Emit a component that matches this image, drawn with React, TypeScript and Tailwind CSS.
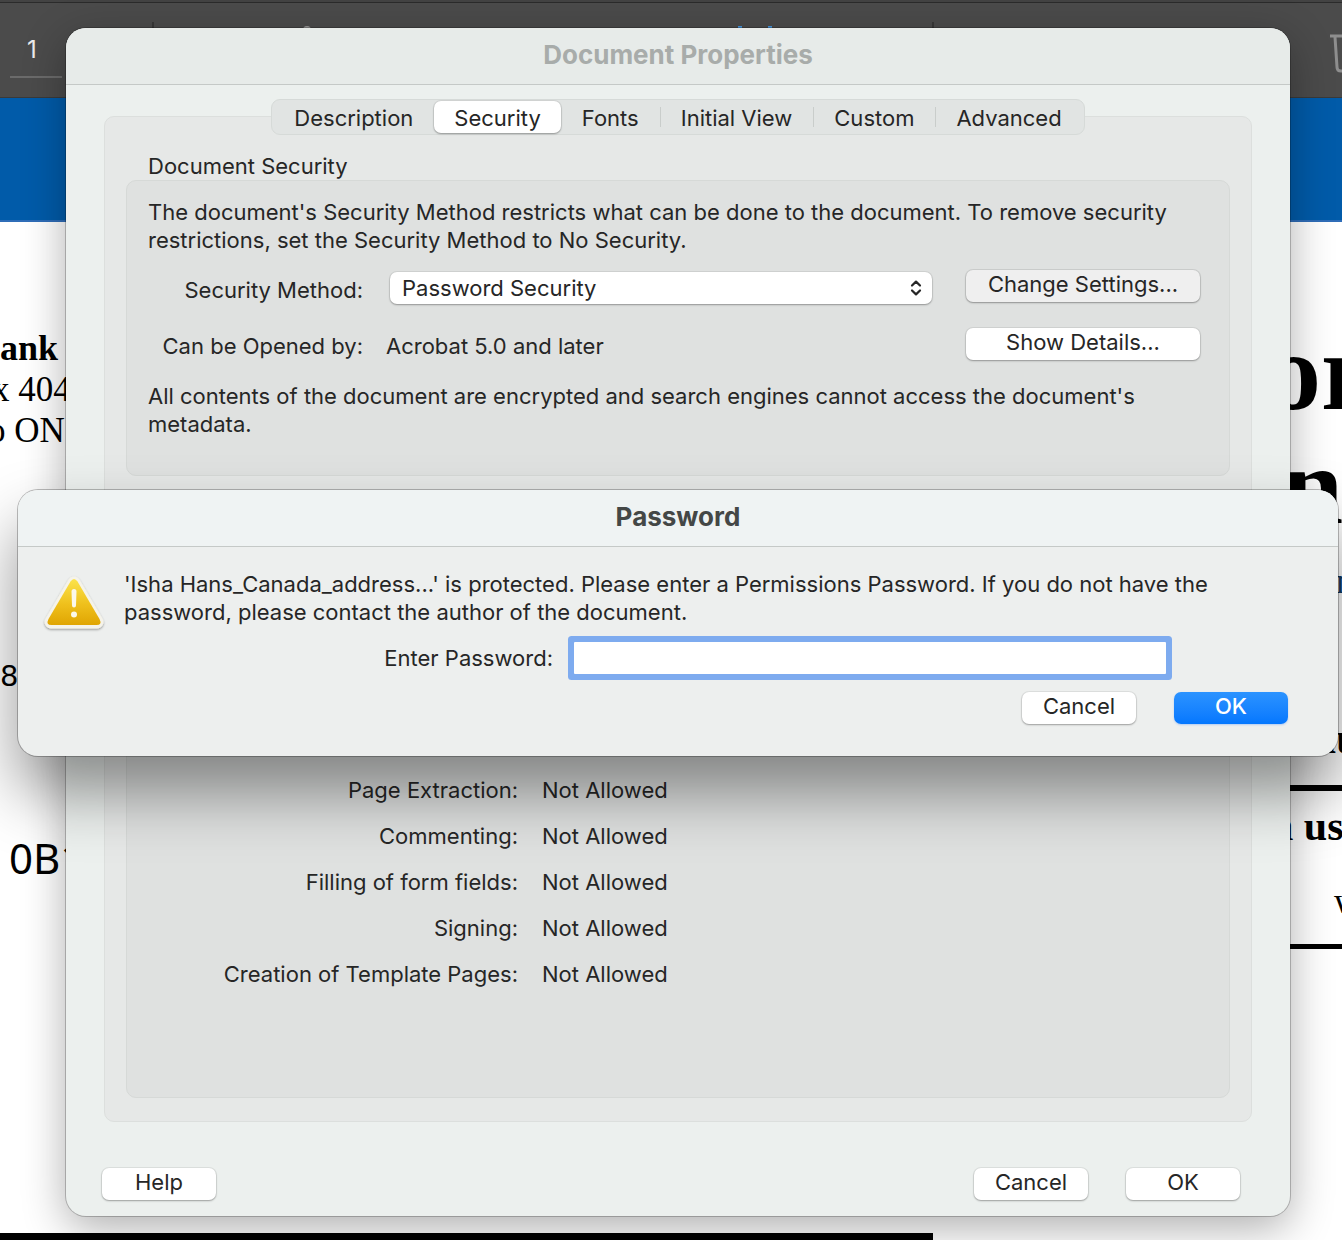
import type { ReactNode } from "react"
import { clsx } from "clsx"

const TABS = ["Description", "Security", "Fonts", "Initial View", "Custom", "Advanced"]

const RESTRICTIONS = [
  { label: "Page Extraction:", value: "Not Allowed" },
  { label: "Commenting:", value: "Not Allowed" },
  { label: "Filling of form fields:", value: "Not Allowed" },
  { label: "Signing:", value: "Not Allowed" },
  { label: "Creation of Template Pages:", value: "Not Allowed" },
]

function PushButton({
  children,
  variant = "default",
  wide = false,
}: {
  children: ReactNode
  variant?: "default" | "muted" | "primary"
  wide?: boolean
}) {
  return (
    <button
      type="button"
      className={clsx(
        "h-8 shrink-0 rounded-[7px] pb-1 leading-7",
        wide ? "w-[234px]" : "w-[114px]",
        variant === "default" &&
          "bg-white shadow-[0_0_0_1px_rgba(0,0,0,0.06),0_1px_2px_rgba(0,0,0,0.3)]",
        variant === "muted" &&
          "bg-[#efefef] shadow-[0_0_0_1px_rgba(0,0,0,0.08),0_1px_2px_rgba(0,0,0,0.3)]",
        variant === "primary" &&
          "bg-linear-to-b from-[#2b93ff] to-[#0477fe] font-medium text-white shadow-[0_1px_2px_rgba(0,100,255,0.25)]"
      )}
    >
      {children}
    </button>
  )
}

function Toolbar() {
  return (
    <header className="flex h-[98px] items-start overflow-hidden border-b border-[#3a3a3a] bg-[#4b4b4b] pl-[10px] shadow-[inset_0_2px_0_#434343,inset_0_3px_0_#2b2b2b]">
      <input
        aria-label="Page number"
        defaultValue="1"
        className="mt-[23px] h-[55px] w-[52px] shrink-0 border-b-2 border-[#6b6b6b] bg-transparent pr-2 text-center text-[24px] text-[#ececec] outline-none"
      />
      <span className="mt-[22px] ml-[90px] h-12 w-0.5 shrink-0 bg-[#373737]" />
      <svg className="mt-[26px] ml-[149px] shrink-0" width="8" height="40" viewBox="0 0 8 40" fill="none" stroke="#9a9a9a" strokeWidth="2">
        <path d="M1 40V4a3 3 0 0 1 6 0v36" />
      </svg>
      <svg className="mt-[26px] ml-[427px] shrink-0" width="34" height="40" viewBox="0 0 34 40" fill="none" stroke="#4a98dd" strokeWidth="4">
        <path d="M2 0v40M32 0v40" />
      </svg>
      <span className="mt-[22px] ml-[160px] h-12 w-0.5 shrink-0 bg-[#373737]" />
      <svg className="mt-[33px] ml-auto -mr-6 shrink-0" width="36" height="42" viewBox="0 0 36 42" fill="none" stroke="#8e8e8e" strokeWidth="3">
        <path d="M0 3H36" />
        <path d="M5 4l2 30q0 4 4 4h14q4 0 4-4l2-30M14 10v22M22 10v22" />
      </svg>
    </header>
  )
}

// The open PDF page that shows around the edges of the two windows.
function DocumentPage() {
  return (
    <main className="flex justify-between overflow-hidden bg-white font-['Liberation_Serif',serif] text-black">
      <div className="w-24 whitespace-nowrap">
        <p className="mt-[106px] text-[36px] leading-[41px] font-bold">ank</p>
        <p className="-ml-2 text-[35px] leading-[41px]">x 404</p>
        <p className="-ml-3 text-[35px] leading-[41px]">o ON</p>
        <p className="mt-[205px] font-['DejaVu_Sans',sans-serif] text-[29px] leading-10">8</p>
        <p className="mt-[142px] pl-[9px] font-['Noto_Sans',sans-serif] text-[42px] leading-10">0B1</p>
      </div>
      <div className="w-[76px] whitespace-nowrap">
        <p className="mt-[93px] text-[110px] leading-[114px] font-bold">or</p>
        <p className="pl-4 text-[110px] leading-[114px] font-bold">n</p>
        <p className="mt-[18px] pl-[70px] text-[36px] leading-10 text-[#123a63]">n</p>
        <p className="mt-[118px] pl-12 text-[44px] leading-10 font-bold">au</p>
        <hr className="mt-[26px] border-t-[6px] border-black" />
        <p className="mt-[15px] pl-1 text-[42px] leading-10 font-bold">n us</p>
        <p className="mt-[35px] pl-[68px] text-[36px] leading-10">w</p>
        <hr className="mt-[23px] border-t-[5px] border-black" />
      </div>
    </main>
  )
}

function WindowTitle({ children, className }: { children: ReactNode; className: string }) {
  return (
    <h2
      className={clsx(
        "flex h-[57px] items-center justify-center rounded-t-[20px] border-b border-[#c5c9c7] pb-0.5 text-[26px] font-bold",
        className
      )}
    >
      {children}
    </h2>
  )
}

function PropertiesWindow() {
  return (
    <section className="absolute top-7 right-[52px] left-[66px] rounded-[20px] bg-[#ecf0ee] shadow-[0_0_0_1px_rgba(0,0,0,0.22),0_12px_44px_rgba(0,0,0,0.32)]">
      <WindowTitle className="bg-[#e7ebe9] text-[#a8acaa]">Document Properties</WindowTitle>

      <div className="px-[38px] pt-[14px]">
        <nav className="relative z-10 mx-auto -mb-[19px] flex h-9 w-fit items-center gap-px rounded-[9px] border border-[#d6dad8] bg-[#e1e4e3] px-0.5">
          {TABS.map((tab, index) => (
            <div key={tab} className="flex items-center">
              {index > 2 ? <span aria-hidden className="h-5 w-px bg-[#c9cdcb]" /> : null}
              <button
                type="button"
                className={clsx(
                  "h-8 rounded-[7px] px-5 pt-0.5 leading-7",
                  tab === "Security" &&
                    "bg-white shadow-[0_0_0_1px_rgba(0,0,0,0.06),0_1px_2px_rgba(0,0,0,0.3)]"
                )}
              >
                {tab}
              </button>
            </div>
          ))}
        </nav>

        <div className="rounded-[10px] border border-[#dcdfdd] bg-[#e6e8e7] px-[21px] pt-[35px] pb-[23px]">
          <h3 className="px-[22px] leading-7">Document Security</h3>

          <div className="rounded-[10px] border border-[#d6d9d7] bg-[#dfe1e0] px-[21px] pt-[17px] pb-[37px]">
            <p>
              The document's Security Method restricts what can be done to the document. To remove
              security
              <br />
              restrictions, set the Security Method to No Security.
            </p>
            <div className="mt-4 flex items-center pr-[8px]">
              <label htmlFor="method" className="w-[215px] pt-1 text-right">
                Security Method:
              </label>
              <div className="relative ml-[27px] flex-1">
                <select
                  id="method"
                  className="block h-8 w-full appearance-none rounded-[7px] bg-white px-3 shadow-[0_0_0_1px_rgba(0,0,0,0.06),0_1px_2px_rgba(0,0,0,0.3)]"
                >
                  <option>Password Security</option>
                </select>
                <svg className="pointer-events-none absolute top-2 right-[10px]" width="12" height="16" viewBox="0 0 12 16" fill="none" stroke="#262626" strokeWidth="2.2" strokeLinecap="round" strokeLinejoin="round">
                  <path d="M2 5.5 6 1.6l4 3.9M2 10.5l4 3.9 4-3.9" />
                </svg>
              </div>
              <div className="ml-[34px] flex pb-1">
                <PushButton variant="muted" wide>
                  Change Settings...
                </PushButton>
              </div>
            </div>
            <div className="mt-[22px] flex items-center pr-[8px]">
              <span className="w-[215px] text-right">Can be Opened by:</span>
              <span className="ml-[23px] flex-1">Acrobat 5.0 and later</span>
              <div className="flex pb-1">
                <PushButton wide>Show Details...</PushButton>
              </div>
            </div>
            <p className="mt-[18px]">
              All contents of the document are encrypted and search engines cannot access the
              document's
              <br />
              metadata.
            </p>
          </div>

          <dl className="mt-[59px] grid grid-cols-[391px_1fr] gap-x-6 rounded-[10px] border border-[#d6d9d7] bg-[#dfe1e0] pt-[231px] pb-[100px] leading-[46px]">
            {RESTRICTIONS.map((row) => (
              <div key={row.label} className="contents">
                <dt className="text-right">{row.label}</dt>
                <dd>{row.value}</dd>
              </div>
            ))}
          </dl>
        </div>
      </div>

      <footer className="flex items-center gap-[38px] pt-[46px] pr-[50px] pb-4 pl-9">
        <PushButton>Help</PushButton>
        <span className="flex-1" />
        <PushButton>Cancel</PushButton>
        <PushButton>OK</PushButton>
      </footer>
    </section>
  )
}

function WarningIcon() {
  return (
    <svg className="shrink-0" width="64" height="66" viewBox="0 -2 64 66" aria-hidden>
      <defs>
        <linearGradient id="amber" x1="0" y1="0" x2="0" y2="1">
          <stop offset="0" stopColor="#fbe34b" />
          <stop offset="0.55" stopColor="#efc01c" />
          <stop offset="1" stopColor="#e0a502" />
        </linearGradient>
        <filter id="drop" x="-20%" y="-20%" width="140%" height="150%">
          <feDropShadow dx="0" dy="1.2" stdDeviation="1.1" floodOpacity="0.38" />
        </filter>
      </defs>
      <path
        d="M32 11 55 50H9Z"
        fill="#f5f3ea"
        stroke="#f5f3ea"
        strokeWidth="13"
        strokeLinejoin="round"
        filter="url(#drop)"
      />
      <path
        d="M28.5 9.5Q32 4.5 35.5 9.5L57.5 47Q60.5 53 54.5 53H9.5Q3.5 53 6.5 47Z"
        fill="url(#amber)"
      />
      <path d="M29.5 19.5a2.5 2.5 0 0 1 5 0l-.5 14a2 2 0 0 1-4 0Z" fill="#fbf8ea" />
      <circle cx="32" cy="42.5" r="3" fill="#fbf8ea" />
    </svg>
  )
}

function PasswordDialog() {
  return (
    <section
      role="dialog"
      aria-label="Password"
      className="absolute top-[490px] right-1 left-[18px] rounded-[20px] bg-[#edefee] shadow-[0_0_0_1px_rgba(0,0,0,0.25),0_36px_64px_rgba(0,0,0,0.42)]"
    >
      <WindowTitle className="bg-[#eff3f3] text-[#444746]">Password</WindowTitle>

      <div className="flex gap-[18px] pt-[23px] pl-6">
        <WarningIcon />
        <p>
          'Isha Hans_Canada_address...' is protected. Please enter a Permissions Password. If you do
          not have the
          <br />
          password, please contact the author of the document.
        </p>
      </div>
      <div className="mt-1.5 flex items-center pr-[172px]">
        <label htmlFor="password" className="w-[535px] text-right">
          Enter Password:
        </label>
        <input
          id="password"
          type="password"
          className="ml-[21px] h-8 min-w-0 flex-1 rounded-[1px] bg-white px-2 shadow-[0_1px_0_#5f8bc9] ring-6 ring-[#7eabef] outline-none"
        />
      </div>
      <div className="flex justify-end gap-[38px] pt-[18px] pr-[50px] pb-8">
        <PushButton>Cancel</PushButton>
        <PushButton variant="primary">OK</PushButton>
      </div>
    </section>
  )
}

export default function App() {
  return (
    <div className="relative min-h-screen overflow-hidden bg-white font-['Inter',sans-serif] text-[22px] leading-7 text-[#262626]">
      <Toolbar />
      <div className="h-[124px] border-b-2 border-[#2f6db8] bg-[#015ba9]" />
      <DocumentPage />
      <div className="absolute bottom-0 left-0 h-[7px] w-[933px] bg-black" />
      <PropertiesWindow />
      <PasswordDialog />
    </div>
  )
}
